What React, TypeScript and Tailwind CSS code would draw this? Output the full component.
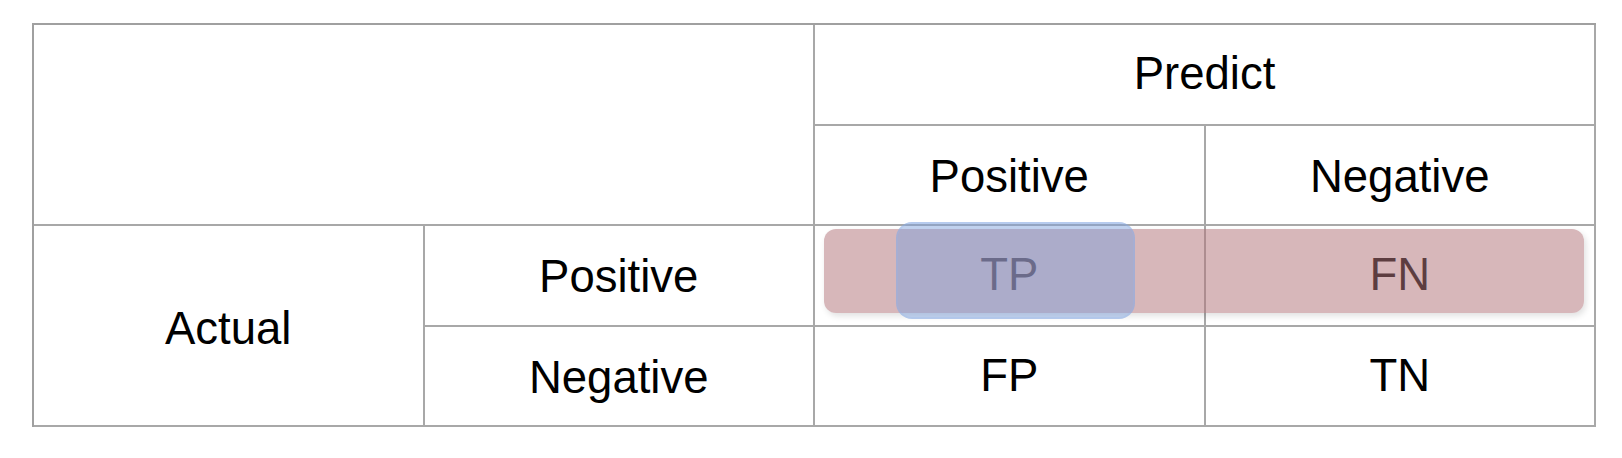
const cell =
  "flex items-center justify-center border-r-2 border-b-2 border-[#a8a8a8]";

export default function App() {
  return (
    <div className="w-[1622px] h-[458px] bg-white pl-[32px] pt-[23px] font-['Liberation_Sans',Arial,sans-serif] text-[45.5px] text-black">
      <div className="relative w-[1564px]">
        <div className="grid grid-cols-4 grid-rows-[repeat(4,100.5px)] border-l-2 border-t-2 border-[#a0a0a0]">
          <div className={`${cell} col-span-2 row-span-2`} />
          <div className={`${cell} col-span-2`}>Predict</div>
          <div className={`${cell} pt-[4px]`}>Positive</div>
          <div className={`${cell} pt-[4px]`}>Negative</div>
          <div className={`${cell} row-span-2 pt-[8px]`}>Actual</div>
          <div className={`${cell} pt-[4px]`}>Positive</div>
          <div className={cell}>TP</div>
          <div className={cell}>FN</div>
          <div className={`${cell} pt-[4px]`}>Negative</div>
          <div className={cell}>FP</div>
          <div className={cell}>TN</div>
        </div>

        {/* highlight: actual positive row */}
        <div className="absolute left-[792px] top-[206px] w-[760px] h-[84px] rounded-[12px] bg-[rgba(178,116,122,0.52)] shadow-[2px_3px_6px_rgba(0,0,0,0.12)]" />
        {/* highlight: predicted positive column */}
        <div className="absolute left-[864px] top-[199px] w-[239px] h-[97px] rounded-[16px] bg-[rgba(124,160,221,0.47)] border-2 border-[rgba(150,185,235,0.25)]" />
      </div>
    </div>
  );
}
